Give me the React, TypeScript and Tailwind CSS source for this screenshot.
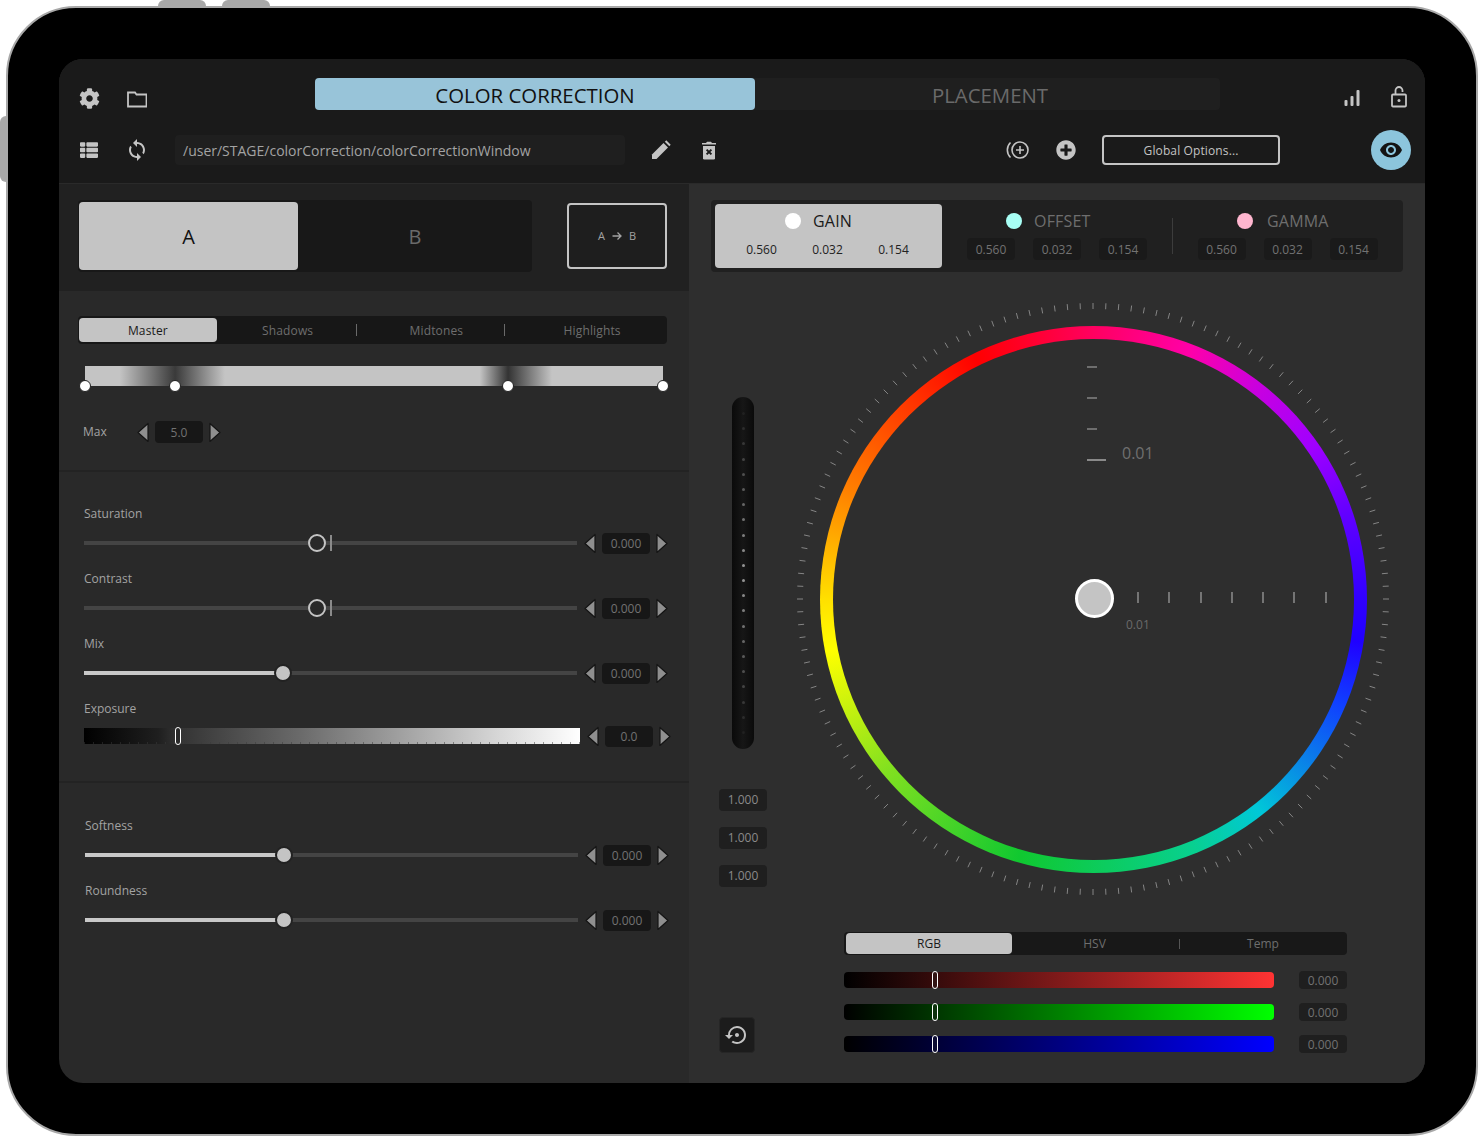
import React from 'react';
import { FaCog, FaThList, FaPlusCircle } from 'react-icons/fa';
import { MdSync, MdVisibility, MdSettingsBackupRestore } from 'react-icons/md';

const Arrow: React.FC<{ dir: 'left' | 'right' }> = ({ dir }) => (
  <svg width="12" height="21" viewBox="0 0 12 21" className="shrink-0">
    <polygon
      points={dir === 'left' ? '11,1.5 11,19.5 1,10.5' : '1,1.5 1,19.5 11,10.5'}
      fill="#8f8f8f"
      stroke="#141414"
      strokeWidth="1.2"
      strokeLinejoin="round"
    />
  </svg>
);

const ValueBox: React.FC<{ value: string; className?: string }> = ({ value, className }) => (
  <div className={`w-12 rounded-sm text-[12px] text-center ${className ?? 'h-[21px] leading-[22px] bg-[#171717] text-[#727272]'}`}>
    {value}
  </div>
);

const Stepper: React.FC<{ value: string }> = ({ value }) => (
  <div className="flex items-center gap-[6px]">
    <Arrow dir="left" />
    <ValueBox value={value} />
    <Arrow dir="right" />
  </div>
);

const Slider: React.FC<{ label: string; thumb: number; fill?: boolean }> = ({ label, thumb, fill }) => (
  <div>
    <div className="h-[18px] text-[12px] leading-[18px] text-[#a3a3a3]">{label}</div>
    <div className="mt-[10px] h-5 flex items-center gap-[7px]">
      <div className="relative w-[493px] h-1 bg-[#444444]">
        {fill ? (
          <>
            <div className="absolute left-0 top-0 h-1 bg-[#c8c8c8]" style={{ width: thumb }} />
            <div
              className="absolute top-[-7px] w-[18px] h-[18px] rounded-full bg-[#c4c4c4] border-2 border-[#222222]"
              style={{ left: thumb - 9 }}
            />
          </>
        ) : (
          <>
            <div
              className="absolute top-[-7px] w-[18px] h-[18px] rounded-full bg-[#292929] border-2 border-[#c4c4c4]"
              style={{ left: thumb - 9 }}
            />
            <div className="absolute top-[-6px] left-[246px] w-[2px] h-4 bg-[#8a8a8a]" />
          </>
        )}
      </div>
      <Stepper value="0.000" />
    </div>
  </div>
);

const Channel: React.FC<{ name: string; dot: string; head: string; active?: boolean; width: string }> = ({ name, dot, head, active, width }) => (
  <div className={`${width} h-16 rounded-sm pt-[6px] ${active ? 'bg-[#c4c4c4]' : ''}`}>
    <div className={`flex items-center h-[22px] ${head}`}>
      <div className={`w-4 h-4 rounded-full ${dot}`} />
      <span className={`text-[16px] tracking-[0.2px] ${active ? 'text-[#1a1a1a]' : 'text-[#6e6e6e]'}`}>{name}</span>
    </div>
    <div className={`mt-[6px] flex justify-center gap-[18px] ${active ? 'pr-[2px]' : ''}`}>
      {['0.560', '0.032', '0.154'].map((v) => (
        <div
          key={v}
          className={`w-12 h-[22px] rounded-sm text-[12px] leading-[23px] text-center ${active ? 'text-[#222222]' : 'bg-[#1a1a1a] text-[#727272]'}`}
        >
          {v}
        </div>
      ))}
    </div>
  </div>
);

const Segments: React.FC = () => (
  <div className="mt-[25px] ml-[19px] w-[589px] h-7 rounded bg-[#171717] flex items-center pl-px text-[12px] tracking-[0.15px] leading-[25px] text-[#6e6e6e]">
    <div className="w-[138px] h-6 rounded-sm bg-[#c4c4c4] text-[#1a1a1a] text-center">Master</div>
    <div className="w-[139px] pl-[3px] text-center">Shadows</div>
    <div className="w-px h-3 bg-[#6a6a6a]" />
    <div className="w-[148px] pl-3 text-center">Midtones</div>
    <div className="w-px h-3 bg-[#6a6a6a]" />
    <div className="w-[162px] pl-3 text-center">Highlights</div>
  </div>
);

const ColorBar: React.FC<{ gradient: string; value: string }> = ({ gradient, value }) => (
  <div className="flex items-center gap-[25px]">
    <div className={`relative w-[430px] h-4 rounded-sm ${gradient}`}>
      <div className="absolute left-[88px] top-[-1px] w-[6px] h-[18px] rounded-full border border-white bg-[#2a2a2a]/30" />
    </div>
    <ValueBox value={value} className="h-[18px] leading-[20px] bg-[#1f1f1f] text-[#727272]" />
  </div>
);

const ticks = Array.from({ length: 144 }, (_, i) => (i * 2.5 * Math.PI) / 180);

const Wheel: React.FC = () => (
  <div className="relative w-[592px] h-[592px] flex items-center justify-center">
    <div className="w-[547px] h-[547px] rounded-full bg-[conic-gradient(#ff0060_0deg,#ff00a8_21deg,#c800e0_38deg,#a000ff_55deg,#6000ff_72deg,#3000ff_90deg,#2000ff_99deg,#1040ff_113deg,#0a80e8_127deg,#00c8d8_142deg,#08d090_158deg,#10c830_196deg,#80e020_230deg,#ffff00_259deg,#ffe000_270deg,#ff8000_294deg,#ff0000_334deg,#ff0060_360deg)] flex items-center justify-center">
      <div className="w-[521px] h-[521px] rounded-full bg-[#2e2e2e]" />
    </div>
    <svg width="592" height="592" viewBox="0 0 592 592" className="absolute left-0 top-0">
      {ticks.map((a, i) => (
        <line
          key={i}
          x1={296 + 290 * Math.sin(a)}
          y1={296 - 290 * Math.cos(a)}
          x2={296 + 296 * Math.sin(a)}
          y2={296 - 296 * Math.cos(a)}
          stroke="#858585"
          strokeWidth="1"
        />
      ))}
      {[64, 95, 126].map((y) => (
        <line key={y} x1="290" x2="300" y1={y} y2={y} stroke="#9a9a9a" strokeWidth="1.2" />
      ))}
      <line x1="290" x2="309" y1="157" y2="157" stroke="#e5e5e5" strokeWidth="1" />
      {[341, 372, 404, 435, 466, 497, 529].map((x) => (
        <line key={x} x1={x} x2={x} y1="289" y2="300" stroke="#a5a5a5" strokeWidth="1.2" />
      ))}
    </svg>
    <div className="absolute left-[325px] top-[139px] text-[16px] leading-[22px] text-[#707070]">0.01</div>
    <div className="absolute left-[329px] top-[313px] text-[12px] leading-[18px] text-[#6a6a6a]">0.01</div>
    <div className="absolute left-[278px] top-[276px] w-[39px] h-[39px] rounded-full bg-[#c4c4c4] border-[3px] border-white" />
  </div>
);

const fader = Array.from({ length: 22 }, (_, i) => 1 - Math.abs(i - 10.5) / 11.5);

export default function App() {
  return (
    <div className="relative w-[1479px] h-[1137px] bg-white overflow-hidden font-['Open_Sans',sans-serif]">
      <div className="absolute left-[158px] top-0 w-12 h-2 rounded-t-md bg-[#a8a8a8]" />
      <div className="absolute left-[222px] top-0 w-12 h-2 rounded-t-md bg-[#a8a8a8]" />
      <div className="absolute left-0 top-[116px] w-2 h-[66px] rounded-l-md bg-[#a8a8a8]" />

      <div className="relative ml-[6px] mt-[6px] w-[1472px] h-[1130px] border-2 border-[#a8a8a8] rounded-[70px] bg-black p-[51px]">
        <div className="w-[1366px] h-[1024px] rounded-[24px] overflow-hidden flex flex-col bg-[#292929]">
          {/* header */}
          <header className="h-[125px] shrink-0 bg-[#1a1a1a] border-b border-[#2a2a2a] pt-[19px]">
            <div className="flex h-8">
              <div className="w-[256px] shrink-0 pl-5 flex items-start gap-[27px] text-[#c4c4c4] pt-[10px]">
                <FaCog size={21} />
                <svg width="20" height="20" viewBox="0 0 20 20" fill="none" stroke="#c4c4c4" strokeWidth="1.8" className="mt-px">
                  <path d="M1 5V17.5H19.5V5.5H9.5L8 3.5H1V5Z" />
                </svg>
              </div>
              <div className="w-[905px] shrink-0 h-8 rounded-sm bg-[#1f1f1f] flex text-[20.4px] font-medium leading-[34px]">
                <div className="w-[440px] shrink-0 rounded-sm bg-[#98c4d9] text-center text-[#111111]">COLOR CORRECTION</div>
                <div className="w-[470px] shrink-0 text-center text-[#6a6a6a]">PLACEMENT</div>
              </div>
              <div className="ml-[124px] pt-[11px] flex items-start gap-[30px]">
                <svg width="16" height="18" viewBox="0 0 16 18" fill="#c4c4c4">
                  <rect x="0.5" y="11" width="3" height="6" rx="1" />
                  <rect x="6.5" y="7" width="3" height="10" rx="1" />
                  <rect x="12.5" y="1" width="3" height="16" rx="1" />
                </svg>
                <svg width="18" height="22" viewBox="0 0 18 22" fill="none" stroke="#c4c4c4" strokeWidth="1.8" className="-mt-[3px]">
                  <rect x="2" y="8.5" width="14" height="12" rx="1" />
                  <path d="M5.5 8.5V4.5A3.5 3.5 0 0 1 12.5 4.5V6" />
                  <circle cx="9" cy="14.5" r="1.5" fill="#c4c4c4" stroke="none" />
                </svg>
              </div>
            </div>
            <div className="mt-5 h-10 flex items-center pl-5 text-[#c4c4c4]">
              <div className="w-5 flex justify-center"><FaThList size={18} className="shrink-0" /></div>
              <div className="ml-7 w-5 flex justify-center"><MdSync size={24} className="shrink-0" /></div>
              <div className="ml-7 w-[450px] h-[30px] rounded bg-[#1f1f1f] pl-2 text-[14px] leading-[31px] text-[#a3a3a3]">
                /user/STAGE/colorCorrection/colorCorrectionWindow
              </div>
              <svg width="20" height="20" viewBox="0 0 20 20" fill="#c4c4c4" className="ml-[26px]">
                <path d="M1 14.5L12.5 3L17 7.5L5.5 19H1V14.5Z" />
                <path d="M13.8 1.7L15.3 0.3L19.7 4.7L18.3 6.2Z" />
              </svg>
              <svg width="16" height="19" viewBox="0 0 16 19" className="ml-[30px]">
                <path d="M1 2H5L6 0.8H10L11 2H15V3.4H1Z" fill="#c4c4c4" />
                <path d="M2 5H14V17.2Q14 18.5 12.7 18.5H3.3Q2 18.5 2 17.2Z" fill="#c4c4c4" />
                <path d="M5.6 8.6L10.4 13.4M10.4 8.6L5.6 13.4" stroke="#1a1a1a" strokeWidth="2" />
              </svg>
              <svg width="24" height="20" viewBox="0 0 24 20" fill="none" stroke="#c4c4c4" strokeWidth="1.6" className="ml-[289px]">
                <circle cx="14" cy="10" r="8" />
                <path d="M14 6V14M10 10H18" />
                <path d="M4.5 2.5A10.5 10.5 0 0 0 4.5 17.5" />
              </svg>
              <div className="ml-[26px] w-5 flex justify-center"><FaPlusCircle size={20} /></div>
              <div className="ml-[26px] w-[178px] h-[30px] rounded-sm border-2 border-[#c4c4c4] text-center text-[12px] tracking-[0.12px] leading-[27px]">
                Global Options...
              </div>
              <div className="ml-[91px] w-10 h-10 rounded-full bg-[#8cc5dc] flex items-center justify-center text-[#141414]">
                <MdVisibility size={24} />
              </div>
            </div>
          </header>

          <div className="flex flex-1 min-h-0">
            {/* left panel */}
            <div className="w-[630px] shrink-0 flex flex-col">
              <div className="h-[107px] bg-[#212121] pt-4 pl-[19px] flex">
                <div className="w-[454px] h-[72px] rounded bg-[#181818] flex items-center pl-px">
                  <div className="w-[219px] h-[68px] rounded-sm bg-[#c4c4c4] text-[20px] leading-[70px] text-center text-[#111111]">A</div>
                  <div className="w-[234px] pt-px text-[20px] text-center text-[#6a6a6a]">B</div>
                </div>
                <div className="ml-[35px] mt-[3px] w-[100px] h-[66px] rounded-sm border-2 border-[#c4c4c4] bg-[#1e1e1e] text-[11px] text-[#a3a3a3] flex items-center justify-center gap-[6px]">
                  <span>A</span>
                  <svg width="12" height="10" viewBox="0 0 12 10" fill="none" stroke="#a3a3a3" strokeWidth="1.3">
                    <path d="M1.5 5H10M6.5 1.5L10 5L6.5 8.5" />
                  </svg>
                  <span>B</span>
                </div>
              </div>

              <div className="h-[181px] border-b-2 border-[#232323]">
                <Segments />
                <div className="relative mt-[22px] ml-[26px] w-[578px] h-5 bg-[linear-gradient(90deg,#c4c4c4_0%,#c4c4c4_6%,#3a3a3a_15.6%,#c4c4c4_24.2%,#c4c4c4_68.3%,#333333_73.2%,#c4c4c4_80.8%,#c4c4c4_100%)]">
                  {[0, 90, 423, 578].map((x) => (
                    <div key={x} className="absolute top-[14px] w-3 h-3 rounded-full bg-white border border-[#222222]" style={{ left: x - 6 }} />
                  ))}
                </div>
                <div className="mt-[35px] ml-6 flex items-center h-[22px] text-[12px] text-[#a3a3a3]">
                  <div className="w-[54px] -mt-px">Max</div>
                  <div className="flex items-center gap-[6px]">
                    <Arrow dir="left" />
                    <ValueBox value="5.0" className="h-[22px] leading-[24px] bg-[#171717] text-[#727272]" />
                    <Arrow dir="right" />
                  </div>
                </div>
              </div>

              <div className="h-[311px] border-b-2 border-[#232323] pl-[25px] pt-[33px] flex flex-col gap-[17px]">
                <Slider label="Saturation" thumb={233} />
                <Slider label="Contrast" thumb={233} />
                <Slider label="Mix" thumb={199} fill />
                <div>
                  <div className="h-[18px] text-[12px] leading-[18px] text-[#a3a3a3]">Exposure</div>
                  <div className="mt-2 h-5 flex items-center gap-[7px]">
                    <div className="relative w-[496px] h-4 bg-[linear-gradient(90deg,#000000_0%,#1f1f1f_15%,#333333_19%,#6a6a6a_43.5%,#a0a0a0_63.7%,#d8d8d8_84%,#ffffff_100%)]">
                      <div className="absolute left-0 right-0 bottom-0 h-[2px] bg-[repeating-linear-gradient(90deg,#3a3a3a80_0,#3a3a3a80_1px,transparent_1px,transparent_9px)]" />
                      <div className="absolute left-[91px] top-[-1px] w-[6px] h-[18px] rounded-full border border-white bg-[#2a2a2a]" />
                    </div>
                    <Stepper value="0.0" />
                  </div>
                </div>
              </div>

              <div className="pl-[26px] pt-[34px] flex flex-col gap-[17px]">
                <Slider label="Softness" thumb={199} fill />
                <Slider label="Roundness" thumb={199} fill />
              </div>
            </div>

            {/* right panel */}
            <div className="flex-1 bg-[#2e2e2e] pl-[22px] pt-4">
              <div className="w-[692px] h-[72px] rounded bg-[#202020] flex items-center pl-1">
                <Channel name="GAIN" dot="bg-white" head="pl-[70px] gap-3" width="w-[227px]" active />
                <Channel name="OFFSET" dot="bg-[#a8fff5]" head="pl-[64px] gap-3" width="w-[230px]" />
                <div className="w-px h-9 bg-[#3c3c3c]" />
                <Channel name="GAMMA" dot="bg-[#ffb6cf]" head="pl-[64px] gap-[14px]" width="w-[229px]" />
              </div>

              <div className="flex">
                <div className="w-[86px] pl-2 flex flex-col">
                  <div className="mt-[125px] ml-[13px] w-[22px] h-[352px] rounded-full bg-[linear-gradient(90deg,#0a0a0a,#161616_50%,#0a0a0a)] py-[15px] flex flex-col items-center justify-between">
                    {fader.map((o, i) => (
                      <div key={i} className="w-[3px] h-[3px] rounded-full bg-[#9a9a9a]" style={{ opacity: o }} />
                    ))}
                  </div>
                  <div className="mt-10 flex flex-col gap-4">
                    {[0, 1, 2].map((i) => (
                      <ValueBox key={i} value="1.000" className="h-[22px] leading-[22px] bg-[#1f1f1f] text-[#8a8a8a]" />
                    ))}
                  </div>
                  <div className="mt-[130px] w-9 h-9 rounded bg-[#1c1c1c] border border-[#262626] flex items-center justify-center text-[#c4c4c4]">
                    <MdSettingsBackupRestore size={24} />
                  </div>
                </div>

                <div className="pt-[31px]">
                  <Wheel />
                  <div className="mt-[37px] ml-[47px] flex flex-col">
                    <div className="w-[503px] h-[23px] rounded bg-[#181818] flex items-center pl-[2px] text-[12px] text-[#6e6e6e]">
                      <div className="w-[166px] h-[21px] rounded-sm bg-[#c4c4c4] text-[#1a1a1a] leading-[22px] text-center">RGB</div>
                      <div className="w-[167px] pr-[2px] text-center">HSV</div>
                      <div className="w-px h-[10px] bg-[#555555]" />
                      <div className="w-[166px] text-center">Temp</div>
                    </div>
                    <div className="mt-4 flex flex-col gap-[14px]">
                      <ColorBar gradient="bg-[linear-gradient(90deg,#000000,#ff3333)]" value="0.000" />
                      <ColorBar gradient="bg-[linear-gradient(90deg,#000000,#00ff00)]" value="0.000" />
                      <ColorBar gradient="bg-[linear-gradient(90deg,#000000,#0000ff)]" value="0.000" />
                    </div>
                  </div>
                </div>
              </div>
            </div>
          </div>
        </div>
      </div>
    </div>
  );
}
